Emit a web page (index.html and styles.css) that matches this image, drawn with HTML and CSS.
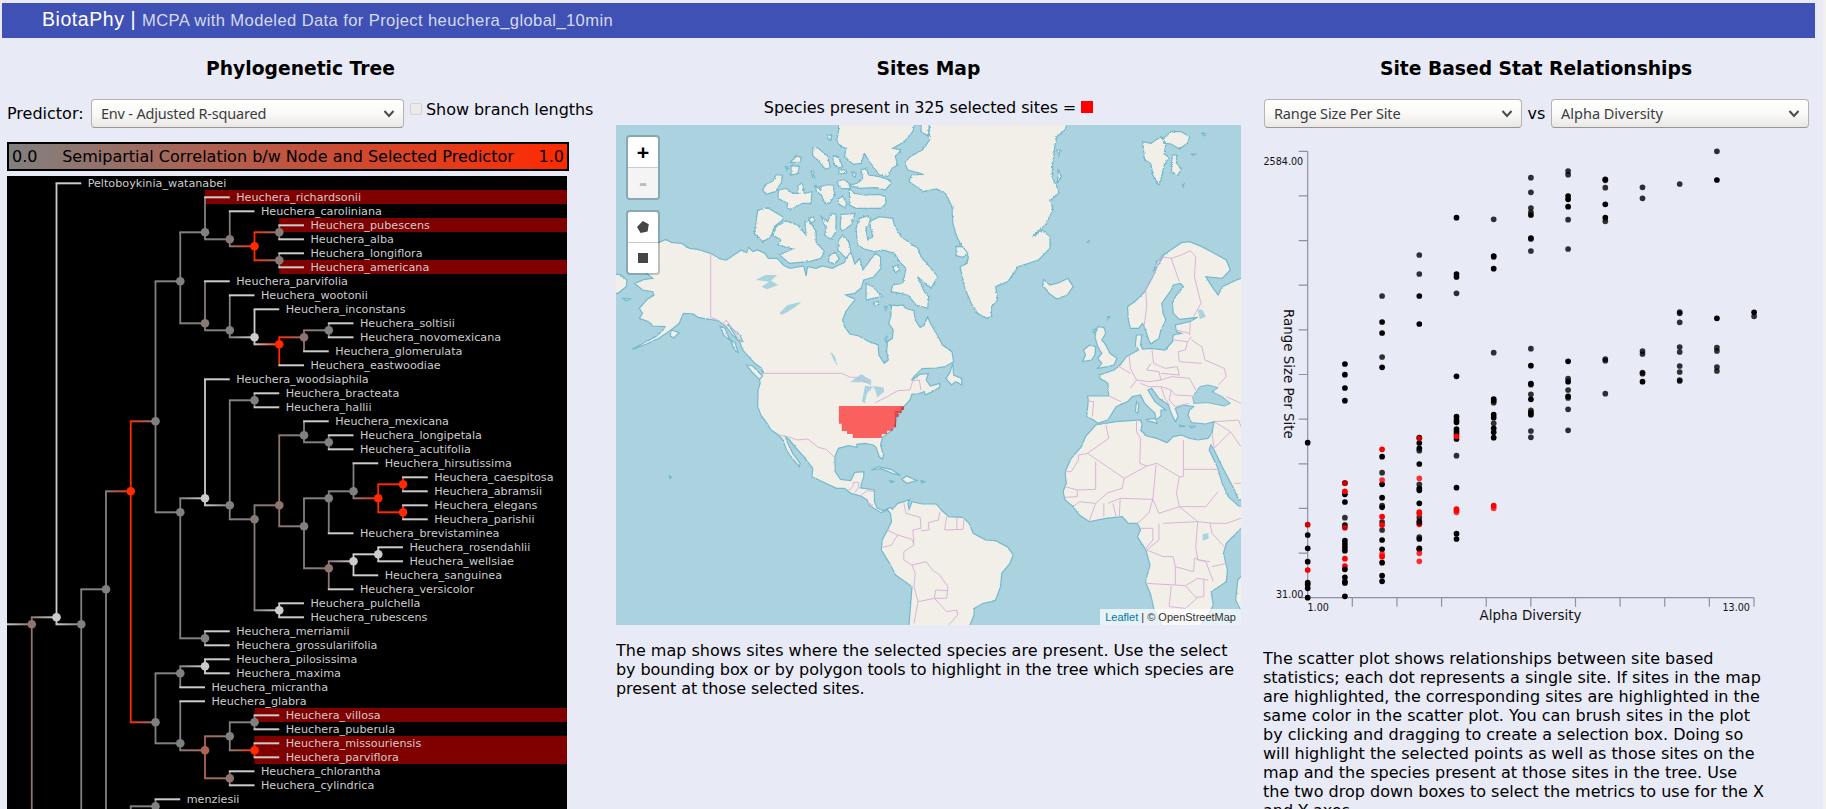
FILE: index.html
```html
<!DOCTYPE html>
<html lang="en">
<head>
<meta charset="utf-8">
<title>BiotaPhy</title>
<link rel="stylesheet" href="styles.css">
</head>
<body>
<header class="topbar"><span class="brand">BiotaPhy |</span><span class="project">MCPA with Modeled Data for Project heuchera_global_10min</span></header>
<main class="columns">
  <section class="col tree-col">
    <h3 class="title">Phylogenetic Tree</h3>
    <div class="controls">
      <span class="predictor">Predictor:</span>
      <div class="select select-predictor"><span class="sel-env">Env - Adjusted R-squared</span><svg class="chevron" viewBox="0 0 12 8"><path d="M1.5 1l4.5 5 4.5-5"/></svg></div>
      <div class="branch"><span class="checkbox"></span><span>Show branch lengths</span></div>
    </div>
    <div class="scale"><span>0.0</span><span>Semipartial Correlation b/w Node and Selected Predictor</span><span>1.0</span></div>
    <svg class="tree" id="tree" viewBox="7 176 560 633"></svg>
  </section>
  <section class="col map-col">
    <h3 class="title">Sites Map</h3>
    <div class="map-legend">Species present in 325 selected sites = <span class="swatch"></span></div>
    <div class="map">
      <svg class="world" viewBox="15 255 1531 1500" preserveAspectRatio="none">
        <defs><filter id="rough" x="0" y="0" width="1" height="1"><feTurbulence type="fractalNoise" baseFrequency="0.16" numOctaves="2" seed="4"/><feDisplacementMap in="SourceGraphic" scale="5" xChannelSelector="R" yChannelSelector="G"/></filter>
        <filter id="fjord" x="0" y="0" width="1" height="1"><feTurbulence type="fractalNoise" baseFrequency="0.2" numOctaves="2" seed="9"/><feDisplacementMap in="SourceGraphic" scale="7" xChannelSelector="R" yChannelSelector="G"/></filter></defs>
        <g class="land" filter="url(#rough)">
          <path d="M115 610L137 598 150 607 175 610 195 625 215 628 247 640 270 657 285 660 300 648 322 630 335 638 340 622 350 635 362 630 380 640 388 655 410 655 425 675 440 685 475 678 481 708 484 680 505 685 520 678 545 685 560 675 575 668 580 640 592 640 600 672 612 655 620 690 650 640 663 650 664 685 645 712 622 720 615 745 600 760 577 765 602 778 590 795 578 815 570 840 575 860 588 882 610 888 635 905 657 914 659 945 672 970 682 960 678 935 680 905 692 895 694 870 683 850 688 830 690 800 685 795 705 797 718 795 725 805 745 812 748 840 760 862 770 855 778 830 785 850 800 880 815 915 838 935 842 965 820 980 800 984 765 986 745 1010 738 1022 760 1003 780 1000 775 1020 785 1038 808 1030 808 1042 790 1055 772 1065 770 1055 755 1062 740 1062 735 1080 720 1100 712 1120 703 1130 700 1150 692 1170 668 1192 663 1215 670 1245 668 1258 660 1250 652 1222 645 1215 625 1210 605 1213 605 1222 585 1217 560 1225 551 1250 552 1295 565 1318 590 1322 600 1297 622 1295 622 1310 613 1343 648 1350 648 1385 655 1405 670 1412 688 1402 692 1408 705 1390 720 1385 735 1378 730 1390 733 1408 740 1385 765 1392 800 1392 812 1410 830 1430 865 1432 880 1450 890 1480 920 1500 945 1502 975 1522 988 1545 980 1570 960 1600 957 1640 945 1680 935 1685 915 1690 893 1705 892 1725 882 1755 882 1790 730 1790 735 1720 740 1640 700 1605 685 1570 665 1530 667 1500 680 1470 690 1445 687 1420 680 1410 665 1418 650 1408 635 1395 630 1380 615 1368 590 1360 575 1345 555 1345 495 1310 497 1285 475 1250 460 1230 440 1200 430 1190 436 1210 448 1240 466 1270 464 1280 440 1245 432 1228 424 1200 413 1185 395 1170 385 1150 370 1125 362 1100 363 1050 368 1030 366 1010 375 1000 372 985 355 970 340 950 325 930 318 905 300 885 285 860 265 842 245 838 215 832 205 822 180 820 170 850 150 870 120 895 90 912 55 928 88 905 112 890 130 870 135 860 105 858 95 845 72 835 80 820 72 805 90 780 108 765 105 755 80 750 60 730 85 718 105 715 90 700Z"/>
          <path d="M0 700L25 704 42 720 40 740 20 760 0 758ZM32 775l18 2-10 6zM150 870l20 8-14 16-8-6zM335 975l15 3 24 30-8 10-18-22zM822 1015l10-15 8-30 2 35 20 10 0 20-15-10-10 10zM640 1290l18-10 30 8 24 18-20-6-28-14zM715 1318l12-10 25 14-25 8zM685 1322l12 3-8 3zM762 1322l10 3-8 4z"/>
          <path d="M1062 718L1078 735 1100 728 1122 715 1135 740 1120 765 1095 777 1075 760 1070 750 1060 738ZM1195 860L1210 862 1215 880 1205 900 1215 915 1225 940 1242 955 1235 975 1220 980 1195 985 1205 970 1195 955 1205 940 1195 920 1188 890ZM1175 915L1190 920 1188 945 1180 960 1158 965 1165 945 1160 930ZM1290 1085l6 10-3 25-6-5zM1315 1138l22-3 4 15-25-8zM1420 1158l15 0-10 6zM1395 1155l15 4-14 1zM1538 1620L1560 1590 1570 1710 1545 1710 1533 1680Z"/>
          <path d="M1420 605L1450 620 1480 640 1510 660 1520 690 1500 715 1460 710 1475 740 1490 765 1500 740 1535 720 1580 700 1580 1370 1540 1380 1530 1350 1500 1280 1480 1230 1472 1215 1468 1230 1488 1280 1500 1330 1515 1370 1540 1398 1580 1400 1546 1465 1510 1510 1503 1540 1513 1590 1510 1625 1473 1655 1478 1695 1470 1715 1455 1740 1440 1780 1360 1780 1350 1750 1333 1710 1325 1665 1312 1625 1323 1575 1313 1530 1292 1490 1300 1470 1292 1450 1270 1450 1255 1430 1215 1435 1175 1445 1150 1425 1135 1400 1115 1380 1110 1355 1118 1330 1115 1295 1130 1255 1155 1220 1165 1190 1190 1155 1240 1145 1300 1140 1304 1155 1300 1170 1315 1188 1340 1195 1365 1208 1380 1190 1400 1185 1420 1195 1440 1200 1465 1195 1475 1180 1480 1145 1460 1152 1425 1148 1416 1125 1420 1110 1430 1100 1405 1095 1385 1105 1392 1130 1385 1145 1375 1120 1368 1095 1345 1075 1327 1045 1318 1050 1335 1085 1362 1110 1350 1110 1350 1128 1338 1140 1335 1120 1310 1090 1300 1065 1280 1070 1268 1085 1240 1100 1220 1140 1195 1150 1185 1140 1168 1130 1172 1080 1170 1068 1222 1068 1220 1030 1200 1015 1200 1005 1235 990 1250 975 1265 950 1280 940 1295 930 1287 915 1290 885 1303 885 1300 915 1305 927 1325 925 1360 930 1378 905 1380 885 1400 880 1388 875 1385 855 1420 845 1440 832 1395 838 1380 820 1378 790 1385 770 1405 740 1398 730 1380 735 1375 750 1352 790 1355 820 1362 840 1350 870 1345 895 1325 912 1320 900 1312 870 1305 850 1295 865 1275 865 1270 840 1268 800 1290 780 1310 755 1330 710 1340 680 1350 650 1380 625 1400 608Z"/>
        </g>
        <g class="land" filter="url(#fjord)">
          <path d="M783 230L783 300 765 330 735 350 722 370 730 390 768 403 738 405 733 425 768 455 800 447 822 460 838 500 840 550 850 590 860 615 878 650 875 670 858 680 868 740 885 790 900 820 922 835 935 830 935 800 950 780 945 740 975 725 1000 680 1050 660 1078 625 1078 590 1060 570 1035 590 1070 550 1085 510 1080 480 1100 460 1095 440 1083 410 1085 370 1090 320 1095 290 1115 270 1125 230Z"/>
          <path transform="translate(15 255) scale(.8167 1)" d="M665-20L668 15 662 45 675 65 690 70 685 95 712 118 735 115 745 85 760 110 790 150 815 155 828 130 845 120 838 95 855 75 830 70 865 50 890 20 900-20ZM915-20l0 40 22 14 4-54zM735 135L750 130 758 150 790 155 820 165 825 175 808 195 780 188 730 190 700 180 722 175 740 160ZM700 190L715 205 745 210 790 208 808 215 810 235 795 250 720 250 700 240ZM665 168l20-4 20 15-2 12-25 0-12-10zM665 222l15-8 12 20-5 14-18-10zM590 68l15 0 30 25 8 35-15 5-20-25-18-15zM650 92l18 5 12 28-12 5-15-12zM668 135l22 0 3 10-25 2zM585 138l6 2 5 18-6-2zM635 30l12 0-2 16-10-4zM710 142l10 2-2 12-8-4zM540 92l15 5-2 14-30 2zM525 122l25 2-5 22-20 4zM508 125l8 2-4 8zM480 150L500 150 495 175 478 200 450 208 440 195 450 178 470 168ZM488 195L510 190 530 205 548 205 545 185 558 172 565 205 588 200 585 235 560 235 525 253 512 250 515 235 485 220ZM598 180l15 15-2-10 20-5 20 0 5 30-15 25-15 0-10-25-15-10zM425 255L455 248 500 275 500 285 475 305 465 335 440 350 415 325ZM480 305L510 288 545 300 570 330 567 290 580 285 600 320 600 350 625 380 615 400 580 410 520 415 490 390 530 372 485 360 495 345 470 330ZM578 280l14-5 5 12-15 8zM615 275L635 290 645 265 660 268 660 320 645 342 625 330 630 310ZM675 268L717 265 705 300 680 318 672 310ZM680 330L698 350 705 380 690 400 665 375 668 345ZM725 360L720 310 730 280 755 272 765 285 750 310 755 345 770 335 760 290 790 275 830 280 835 300 855 335 905 370 915 395 945 430 965 455 945 490 920 470 905 455 925 500 938 515 935 550 900 540 875 510 825 500 830 480 860 475 870 430 850 410 835 385 800 375 775 380 745 372ZM750 475L770 485 800 515 770 520 750 525ZM830 425l15-5 5 15-12 8zM772 535l14-6 4 8-12 6zM805 545l8 0-3 10zM640 390l18-8 12 20-15 15-18-8zM1020 365l20 0 15 20-15 12-20-5z"/>
          <path d="M1305 305L1325 310 1350 290 1362 310 1358 340 1370 355 1358 375 1350 420 1344 435 1330 405 1325 370 1310 360ZM1355 295l20-20 25 0 20 15-5 20-20 17-20-15-18-2zM1378 345l10 0 0 25 12 15-8 20-15-5-2-25zM1450 280l12 2-6 6zM1402 436l5-5-2 8zM1424 342l12 0-6 4z"/>
          <path d="M270 860l12 5 10 30 15 15 8 30-12-15-5-20-18-18zM288 850l15 20 15 15 8 20-12-5zM1332 690l8-25 20-25-20 40-10 15zM1182 870l8-3-3 12zM1218 830l6 0-4 8zM1095 330l8 0-3 18zM1098 390l8 20-10 20zM145 1306l6 5-5 6zM1170 605l5-3-3 6z"/>
        </g>
        <g class="water" filter="url(#rough)">
          <path d="M357 720L380 705 410 705 395 722 412 735 385 748 372 740 390 725ZM415 820L435 795 470 785 455 800 440 812 422 824ZM540 935l12 15 6 30-10-20zM588 1027L615 1003 640 1020 640 1032 618 1027ZM625 1037L645 1040 630 1060 625 1090 617 1085ZM645 1038L670 1042 672 1055 655 1072 650 1050ZM1440 808l12 2 8 20-15 8zM1452 1482l14-2 0 16-14 6z"/>
          <path class="sea" d="M1445 1040L1465 1035 1490 1043 1475 1055 1500 1070 1520 1090 1505 1098 1465 1088 1430 1090 1428 1070ZM673 895l6-8-2 22z"/>
        </g>
        <g class="borders">
          <path d="M247 640V832L262 838 275 855 285 840 305 875 322 905M373 1000H568L590 1012 605 1012 640 1035M650 1088L680 1070 705 1052 735 1050 742 1022 758 1020 762 1050M413 1185L435 1190 460 1200 485 1197 510 1222 530 1228 551 1253M585 1352L595 1340 597 1327 610 1327 608 1345 600 1358M610 1370L630 1352 648 1355M630 1388L645 1395M720 1388L725 1420 760 1432 762 1465 742 1470 745 1510M680 1470L705 1485 690 1515 667 1522M705 1485L740 1498 745 1515 720 1535 720 1560 740 1575 775 1565 790 1590 808 1605 828 1640 825 1675 795 1675 798 1650 828 1652M740 1575L748 1600 745 1640 755 1685 795 1675M755 1685L745 1750M795 1675L825 1715 850 1710 852 1725 830 1755M808 1415L805 1440 780 1448 782 1470 762 1472M825 1430L820 1470M850 1433L850 1468M868 1436L865 1468 820 1470"/>
          <path d="M1308 865L1315 800 1312 740 1335 700 1350 650 1375 655 1395 725M1375 655L1400 645 1422 632 1435 650 1432 710 1448 790 1430 830M1422 845L1420 885M1388 870L1420 880M1380 900L1415 905 1425 890M1415 905L1410 930 1392 935M1425 900L1450 920 1458 960 1505 985 1510 1010 1490 1035M1392 935L1395 965 1450 970M1328 930L1332 970 1360 985 1390 980M1272 945L1275 985 1290 1020 1275 1045M1240 975L1275 1000M1290 1020L1320 1025 1350 1020 1345 995 1315 990 1325 970M1350 1000L1395 1005 1390 980M1350 1020L1375 1010 1420 1015 1435 1050M1300 1030L1320 1040 1350 1040 1375 1050 1385 1065 1430 1068M1350 1040L1360 1075 1370 1095M1375 1050L1370 1080 1385 1100 1418 1090M1222 1068L1252 1085M1170 1083L1185 1085 1182 1130M1215 1155L1222 1195 1170 1240M1290 1140L1290 1175 1300 1195 1298 1270 1315 1278 1340 1270 1395 1310M1405 1200V1288H1488M1405 1288L1405 1310 1395 1310M1170 1240L1148 1245 1148 1260 1130 1295 1113 1295M1170 1240L1260 1315 1315 1278M1190 1265L1190 1348 1145 1350 1115 1340M1145 1350L1145 1370 1115 1372M1260 1315L1255 1345 1220 1358 1190 1390 1150 1385 1135 1400M1190 1390L1175 1440M1210 1390L1210 1430M1232 1390L1240 1430M1220 1390L1250 1375 1330 1378 1338 1275M1250 1375L1248 1430M1330 1378L1320 1420 1292 1450M1395 1310L1388 1360 1395 1400 1345 1420 1330 1378M1395 1400L1440 1445 1480 1450 1510 1450 1546 1435M1395 1400L1460 1400 1490 1355M1470 1450L1475 1480 1505 1520M1440 1445L1435 1520 1440 1560 1470 1565M1300 1465L1330 1465 1330 1500 1313 1525M1345 1450L1345 1500 1315 1530 1355 1550 1380 1550 1385 1580 1430 1595 1432 1555 1460 1565 1478 1625M1355 1450L1440 1445M1385 1580L1385 1635 1312 1630M1385 1635L1410 1637 1440 1615 1465 1620M1410 1637L1435 1672 1455 1670 1455 1620M1375 1638L1370 1700 1410 1705 1440 1672M1480 1145L1540 1140 1546 1160M1480 1145L1520 1175 1480 1225 1475 1180M1520 1175L1546 1220M1530 1330L1546 1330M1510 1070L1546 1090M1475 1580L1510 1570"/>
        </g>
        <path class="sites" d="M561 1098H720V1110H714V1119H707V1130H701V1162H693V1172H679V1182H666V1194H595V1182H581V1173H568V1151H561Z"/>
        <path class="sites-edge" d="M712 1100H720V1110H714V1119H707V1130H701V1162H698V1112H712Z"/>
      </svg>
      <div class="map-buttons">
        <div class="group"><span class="btn plus">+</span><span class="btn minus">-</span></div>
        <div class="group"><span class="btn"><svg class="shape" viewBox="0 0 14 14"><path d="M6.8 1L12.8 4.2 11.6 11.6 4.6 13 1 7z"/></svg></span><span class="btn"><svg class="shape" viewBox="0 0 14 14"><path d="M2 2h10v10H2z"/></svg></span></div>
      </div>
      <div class="attribution"><span class="link">Leaflet</span> | © OpenStreetMap</div>
    </div>
    <p class="caption">The map shows sites where the selected species are present. Use the select<br><span class="snug">by bounding box or by polygon tools to highlight in the tree which species are</span><br><span class="snug">present at those selected sites.</span></p>
  </section>
  <section class="col plot-col">
    <h3 class="title">Site Based Stat Relationships</h3>
    <div class="controls plot-controls">
      <div class="select"><span class="sel-range">Range Size Per Site</span><svg class="chevron" viewBox="0 0 12 8"><path d="M1.5 1l4.5 5 4.5-5"/></svg></div>
      <span class="vs">vs</span>
      <div class="select"><span class="sel-alpha">Alpha Diversity</span><svg class="chevron" viewBox="0 0 12 8"><path d="M1.5 1l4.5 5 4.5-5"/></svg></div>
    </div>
    <svg class="plot" id="plot" viewBox="1264 142 545 490"></svg>
    <p class="caption plot-caption">The scatter plot shows relationships between site based<br>statistics; each dot represents a single site. If sites in the map<br>are highlighted, the corresponding sites are highlighted in the<br>same color in the scatter plot. You can brush sites in the plot<br>by clicking and dragging to create a selection box. Doing so<br>will highlight the selected points as well as those sites on the<br>map and the species present at those sites in the tree. Use<br>the two drop down boxes to select the metrics to use for the X<br>and Y axes.</p>
  </section>
</main>
<script src="main.js"></script>
</body>
</html>
```
FILE: styles.css
```css
* { box-sizing: border-box; }
html { background: #f2f0ee; }
body { margin: 0; width: 1823px; height: 809px; overflow: hidden; background: #e8eaf6; color: #000; font: 16px/19px "DejaVu Sans", sans-serif; padding: 3px 8px 0 2px; }
.topbar { height: 35px; background: #3f51b5; display: flex; align-items: center; padding: 0 0 3px 40px; color: #fff; font-family: "Liberation Sans", Arial, sans-serif; white-space: nowrap; }
.brand { font-size: 19.5px; letter-spacing: .55px; width: 100px; }
.project { font-size: 16.6px; letter-spacing: .38px; color: #d5d9f0; padding-top: 2px; }
.columns { display: grid; grid-template-columns: 587px 625px 546px; column-gap: 22px; padding-left: 5px; }
.col { display: flex; flex-direction: column; height: 771px; overflow: hidden; }
.title { margin: 20px 0 0; height: 22px; font-size: 18.72px; line-height: 22px; text-align: center; flex: none; }
.controls { display: flex; align-items: center; height: 29px; margin-top: 19px; flex: none; white-space: nowrap; }
.predictor { width: 84px; }
.select { width: 258px; height: 29px; border: 1px solid #b6b2ac; border-bottom-color: #98958f; border-radius: 4px; background: linear-gradient(#fff, #f9f9f8 50%, #e9e8e6); display: flex; align-items: center; justify-content: space-between; padding: 0 8px 0 9px; font-family: "Noto Sans", sans-serif; font-size: 14.5px; color: #3c3c3c; }
.select-predictor { width: 313px; }
.chevron { width: 12px; height: 8px; fill: none; stroke: #4a4a4a; stroke-width: 2; }
.sel-env { letter-spacing: -.2px; }
.sel-range { letter-spacing: -.15px; }
.branch { display: flex; align-items: center; margin: -8px 0 0 6px; letter-spacing: -.05px; }
.checkbox { width: 12px; height: 12px; margin: -2px 4px 0 0; border: 1px solid #d6d3cf; border-radius: 2px; background: #ebeae9; }
.scale { width: 562px; height: 29px; margin-top: 14px; border: 2px solid #000; background: linear-gradient(90deg, #808080, #ff2a00); display: flex; justify-content: space-between; align-items: center; padding: 0 3px; flex: none; }
.tree { width: 560px; height: 633px; margin-top: 5px; background: #000; flex: none; }
.tree text { fill: #ccc; font-size: 11.2px; }
.hit { fill: #800000; }
.map-legend { height: 19px; margin-top: 18px; text-align: center; flex: none; letter-spacing: -.1px; }
.swatch { display: inline-block; width: 12px; height: 12px; background: red; }
.map { position: relative; width: 625px; height: 500px; margin-top: 8px; background: #aad3df; flex: none; overflow: hidden; }
.world { display: block; width: 625px; height: 500px; }
.world path { vector-effect: non-scaling-stroke; }
.land path { fill: #f2efe9; stroke: #74b9cd; stroke-width: 1.2; }
.water path { fill: #aad3df; }
.water .sea { stroke: #74b9cd; }
.borders path { fill: none; stroke: #dab4d8; stroke-width: 1; }
.world .sites { fill: #ff0000; fill-opacity: .6; }
.world .sites-edge { fill: #a01020; fill-opacity: .3; }
.map-buttons { position: absolute; left: 10px; top: 10px; display: flex; flex-direction: column; gap: 10px; }
.group { width: 34px; border: 2px solid rgba(0,0,0,.2); border-radius: 4px; background: #fff; background-clip: padding-box; overflow: hidden; }
.btn { height: 30px; display: flex; align-items: center; justify-content: center; }
.btn + .btn { border-top: 1px solid #ccc; height: 31px; }
.plus, .minus { font: bold 20px/30px "DejaVu Sans Mono", monospace; }
.minus { color: #bbb; background: #f4f4f4; }
.shape { width: 14px; height: 14px; fill: #464646; }
.attribution { position: absolute; right: 0; bottom: 0; height: 16px; padding: 0 5px; background: rgba(255,255,255,.7); color: #333; font: 11px/16px "Liberation Sans", Arial, sans-serif; }
.link { color: #0078a8; }
.caption { margin: 16px 0 0; white-space: nowrap; flex: none; }
.snug { letter-spacing: -.09px; }
.plot-controls { justify-content: space-between; padding-left: 1px; }
.plot { width: 545px; height: 490px; margin: 14px 0 0 1px; flex: none; }
.plot text { fill: #111; }
.axis { fill: none; stroke: #8f90a0; stroke-width: 1.2; }
.num { font-size: 9.6px; }
.label { font-size: 13.4px; }
.plot-caption { margin-top: 17px; }
```
FILE: main.js
```js
const NS = 'http://www.w3.org/2000/svg';
function add(parent, tag, attrs, text) {
  const el = document.createElementNS(NS, tag);
  for (const k in attrs) el.setAttribute(k, attrs[k]);
  if (text) el.textContent = text;
  parent.appendChild(el);
  return el;
}

/* Phylogenetic tree */
const G = '#808080', W = '#cccccc', R = '#ff2a00', B = '#8e736e', D = '#857a77', K = '#ae6355';
const n = (c, ...kids) => ({ c, kids });
const H = s => 'Heuchera_' + s;
const blanks = k => Array(k).fill('');
const data = n(B,
  n(W, 'Peltoboykinia_watanabei',
    n(G,
      n(G,
        n(R,
          n(G,
            n(G,
              n(G, '*' + H('richardsonii'), n(D, H('caroliniana'), n(R, n(D, '*' + H('pubescens'), H('alba')), n(D, H('longiflora'), '*' + H('americana'))))),
              n(D, H('parvifolia'), n(G, H('wootonii'), n(W, H('inconstans'), n(R, n(B, n(G, H('soltisii'), H('novomexicana')), H('glomerulata')), H('eastwoodiae')))))),
            n(G,
              n(W, H('woodsiaphila'),
                n(G, n(G, H('bracteata'), H('hallii')),
                  n(D,
                    n(B, n(G, H('mexicana'), n(G, H('longipetala'), H('acutifolia'))),
                      n(G,
                        n(G, n(G, H('hirsutissima'), n(R, n(R, H('caespitosa'), H('abramsii')), n(R, H('elegans'), H('parishii')))), H('brevistaminea')),
                        n(B, n(W, n(W, H('rosendahlii'), H('wellsiae')), H('sanguinea')), H('versicolor')))),
                    n(W, H('pulchella'), H('rubescens'))))),
              n(G, H('merriamii'), H('grossulariifolia')))),
          n(G,
            n(G, n(W, H('pilosissima'), H('maxima')), H('micrantha')),
            n(G, H('glabra'),
              n(K, n(G, n(G, '*' + H('villosa'), H('puberula')), n(R, '*' + H('missouriensis'), '*' + H('parviflora'))),
                n(B, H('chlorantha'), H('cylindrica')))))),
        n(G, n(G, 'menziesii', ''), ...blanks(12))),
      ...blanks(5))),
  '');

const tree = document.getElementById('tree');
const defs = add(tree, 'defs', {});
const hits = add(tree, 'g', {}), links = add(tree, 'g', {}), nodes = add(tree, 'g', {}), names = add(tree, 'g', {});
const X = d => 7 + 24.75 * d, Y = r => 183.3 + 14 * r;
let row = 0, gid = 0;
function hline(x1, x2, y, a, b) {
  let fill = a;
  if (a !== b) {
    const id = 'g' + gid++;
    const g = add(defs, 'linearGradient', { id });
    add(g, 'stop', { offset: 0, 'stop-color': a });
    add(g, 'stop', { offset: 1, 'stop-color': b });
    fill = `url(#${id})`;
  }
  add(links, 'rect', { x: x1 - 0.9, y: y - 1, width: x2 - x1 + 0.9, height: 2, fill });
}
function place(node, d) {
  if (typeof node === 'string') {
    const r = row++, hit = node[0] === '*';
    if (hit) add(hits, 'rect', { class: 'hit', x: X(d - 1), y: 190 + 14 * (r - 1), width: 567 - X(d - 1), height: 14 });
    if (node) add(names, 'text', { x: X(d) + 6.4, y: Y(r) + 3.7 }, node.replace('*', ''));
    return { a: r, b: r, y: Y(r), leaf: true };
  }
  const kids = node.kids.map(k => place(k, d + 1));
  const a = kids[0].a, b = kids[kids.length - 1].b, y = Y((a + b) / 2);
  add(links, 'rect', { x: X(d) - 0.9, y: kids[0].y, width: 1.8, height: kids[kids.length - 1].y - kids[0].y, fill: node.c });
  kids.forEach((k, i) => hline(X(d), X(d + 1), k.y, k.leaf ? W : node.c, k.leaf ? W : node.kids[i].c));
  add(nodes, 'circle', { cx: X(d), cy: y, r: 4.3, fill: node.c });
  return { a, b, y };
}
const root = place(data, 1);
hline(7, X(1), root.y, W, B);

/* Scatter plot: one list of y positions per alpha diversity value.
   d = overlapping dots, r/q = highlighted, x = highlighted over dark */
const cols = [
  '442.7d 535d 548.3d 561.7d 582.7d 584.7d 588.3d 597.7d 524.7x 570r',
  '364d 374.7d 388d 400.7d 483d 494.3d 502d 517.7 525d 540.7d 544d 547.3d 550.7d 577.3d 581.7d 583d 596.3d 483x 491.3r 527.7x 558.7r 566r 569.3d',
  '296 322d 333d 357 367.3d 456.7d 472.7 484.3d 497.7d 505.7 507.3d 522 530 540d 549.3d 562.7d 575.7d 581.3d 449.3r 480q 516.7r 525r 554q 556.7r',
  '255 274 296d 324d 437.7d 443d 448.3d 450.7 464d 484.3 488.3d 490.3d 503.3d 517.7 521.3 537 539d 548.3d 549.3d 438.3x 478.3q 512r 513.7r 524.3r 522.7 553.3q 561.3q',
  '217.7d 274d 277d 293.3 376.3d 416.7d 420d 422.3d 429d 431.7d 434d 439d 455.7 487.7d 533.7d 539d 436.3r 509r 510.3r 512.3q',
  '219.3 256d 257 268.7d 352.7 399d 400.7d 402.7 414.7d 417.7d 423.3 428.3d 432.3d 437.7d 505.7r 508.3q',
  '177.7 192.3 208 212.3 215d 238d 239 251 348.7 365.7d 383.7d 384.7 394.3 399.3d 410.3 412.7d 414.7d 431 437.3',
  '171 174.7 196d 199.3d 206.7d 219.7 249 361.3d 378.7 381.7d 390 396.3d 398 409.3 430.3',
  '179.3d 180.3 187.7 204.3d 217.7d 221.3 359 360.7 393.7',
  '187.3 198.3 351 354 372.7 373.7 381.7d',
  '184 312 313.3 322.3 347 352 366 372 380 381',
  '151.3 180d 318.3d 347.7 351 367 371',
  '312.3d 316.3'
];
const plot = document.getElementById('plot');
let axis = 'M1307.7 151.3V597.7H1754';
for (let i = 0; i <= 10; i++) {
  axis += `M1298.7 ${151.3 + 44.64 * i}h9`;
  if (i) axis += `M${1307.7 + 44.63 * i} 597.7v9`;
}
add(plot, 'path', { class: 'axis', d: axis });
cols.forEach((c, k) => c.split(' ').forEach(v => {
  const t = v.slice(-1), y = parseFloat(v);
  const fill = { r: '#ff0000', q: '#ff0000', x: '#cc0000' }[t] || '#000';
  const o = { d: 1, r: 1, x: 1 }[t] || 0.8;
  add(plot, 'circle', { cx: 1307.7 + 37.2 * k, cy: y, r: 2.85, fill, 'fill-opacity': o });
}));
add(plot, 'text', { class: 'num', x: 1263.5, y: 165 }, '2584.00');
add(plot, 'text', { class: 'num', x: 1276, y: 598 }, '31.00');
add(plot, 'text', { class: 'num', x: 1307.5, y: 611 }, '1.00');
add(plot, 'text', { class: 'num', x: 1722.5, y: 611 }, '13.00');
add(plot, 'text', { class: 'label', x: 1530.5, y: 620, 'text-anchor': 'middle' }, 'Alpha Diversity');
add(plot, 'text', { class: 'label', transform: 'translate(1284.3 309) rotate(90)' }, 'Range Size Per Site');
```
